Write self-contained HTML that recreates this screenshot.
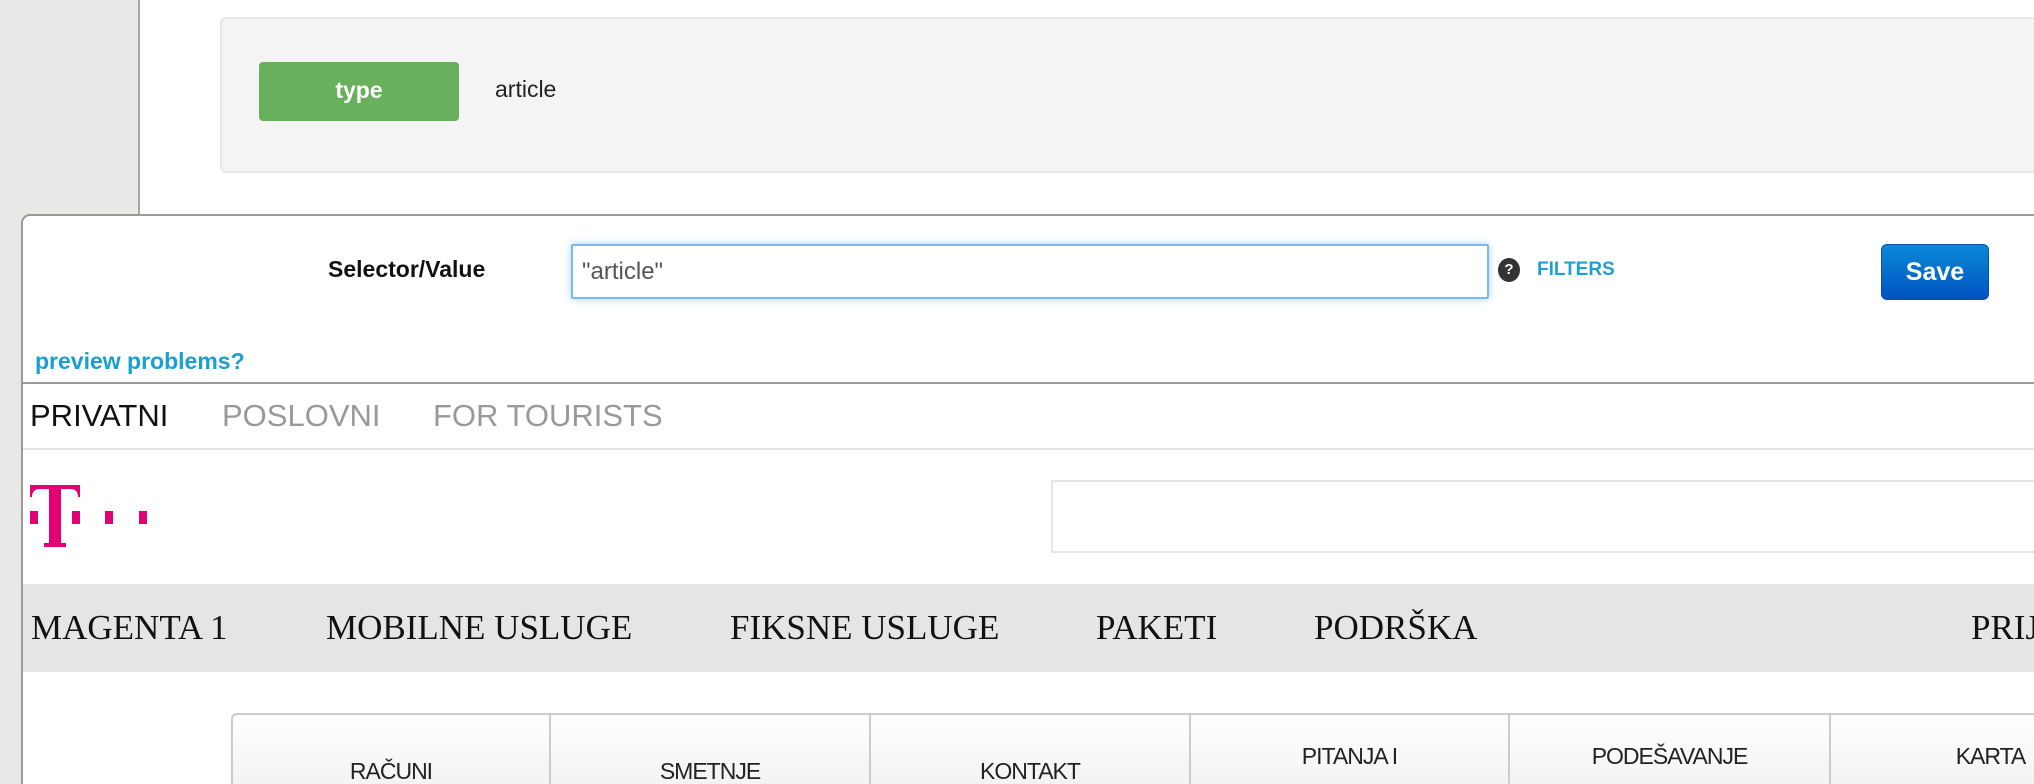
<!DOCTYPE html>
<html style="width:2034px;height:784px;overflow:hidden"><head><meta charset="utf-8"><style>
*{margin:0;padding:0;box-sizing:border-box}
body{width:2034px;height:784px;overflow:hidden;background:#fff;position:relative;font-family:"Liberation Sans",Arial,sans-serif}
.a{position:absolute}
</style></head><body>
<div class="a" style="left:0;top:0;width:140px;height:784px;background:#e8e9e6;border-right:2px solid #a5a5a5"></div>
<div class="a" style="left:220px;top:17px;width:1900px;height:156px;background:#f4f4f4;border:2px solid #e8e8e8;border-radius:6px"></div>
<div class="a" style="left:259px;top:62px;width:200px;height:59px;background:#68b05c;border-radius:4px;color:#fff;font-weight:bold;font-size:23px;text-align:center;line-height:57px">type</div>
<div class="a" style="left:495px;top:76px;font-size:23px;color:#222">article</div>
<div class="a" style="left:21px;top:214px;width:2100px;height:600px;background:#fff;border:2px solid #9a9a9a;border-radius:9px 0 0 0"></div>
<div class="a" style="left:328px;top:256px;font-size:23px;font-weight:bold;color:#111">Selector/Value</div>
<div class="a" style="left:571px;top:244px;width:918px;height:55px;border:2px solid #7ab8ee;box-shadow:0 0 8px #a9d3f7;border-radius:2px;font-size:24px;color:#555;padding:12px 0 0 9px">"article"</div>
<div class="a" style="left:1498px;top:258px;width:22px;height:24px;border-radius:50%;background:#333;color:#fff;font-size:15px;font-weight:bold;text-align:center;line-height:24px">?</div>
<div class="a" style="left:1537px;top:259px;font-size:19px;font-weight:bold;color:#1fa0d0">FILTERS</div>
<div class="a" style="left:1881px;top:244px;width:108px;height:56px;border-radius:6px;background:linear-gradient(#0a8ad6,#0052c2);border:1px solid #0a4fa8;color:#fff;font-weight:bold;font-size:25px;text-align:center;line-height:54px">Save</div>
<div class="a" style="left:35px;top:348px;font-size:23px;font-weight:bold;color:#1a9fd0">preview problems?</div>
<div class="a" style="left:23px;top:382px;width:2011px;height:2px;background:#999"></div>
<div class="a" style="left:30px;top:398px;font-size:31px;color:#111">PRIVATNI</div>
<div class="a" style="left:222px;top:398px;font-size:31px;color:#999">POSLOVNI</div>
<div class="a" style="left:433px;top:398px;font-size:31px;color:#999">FOR TOURISTS</div>
<div class="a" style="left:23px;top:448px;width:2011px;height:2px;background:#e5e5e5"></div>
<svg class="a" style="left:30px;top:485px" width="124" height="62" viewBox="0 0 124 62"><g fill="#e20074"><path d="M0 0h50v12h-2q0-8-8-8h-9v54h5v4H14v-4h5V4h-9q-8 0-8 8H0z"/><rect x="0" y="26" width="8" height="13"/><rect x="42" y="26" width="8" height="13"/><rect x="75" y="26" width="8" height="13"/><rect x="109" y="26" width="8" height="13"/></g></svg>
<div class="a" style="left:1051px;top:480px;width:1000px;height:73px;border:2px solid #e5e5e5"></div>
<div class="a" style="left:23px;top:584px;width:2011px;height:88px;background:#e5e5e5;font-family:'Liberation Serif',serif;font-size:35px;color:#111;overflow:hidden">
<span class="a" style="left:8px;top:24px">MAGENTA 1</span>
<span class="a" style="left:303px;top:24px;white-space:nowrap">MOBILNE USLUGE</span>
<span class="a" style="left:707px;top:24px;white-space:nowrap">FIKSNE USLUGE</span>
<span class="a" style="left:1073px;top:24px">PAKETI</span>
<span class="a" style="left:1291px;top:24px">PODRŠKA</span>
<span class="a" style="left:1948px;top:24px">PRIJ</span>
</div>
<div class="a" style="left:231px;top:713px;width:1803px;height:71px;border:2px solid #ccc;border-bottom:0;border-right:0;border-radius:6px 0 0 0;background:linear-gradient(#fff,#f3f3f3)"></div>
<div class="a" style="top:713px;left:0;width:2034px;height:71px;overflow:hidden;font-size:23px;color:#222;text-align:center;letter-spacing:-1px">
<div class="a" style="left:549px;top:2px;width:2px;height:70px;background:#ccc"></div>
<div class="a" style="left:869px;top:2px;width:2px;height:70px;background:#ccc"></div>
<div class="a" style="left:1189px;top:2px;width:2px;height:70px;background:#ccc"></div>
<div class="a" style="left:1508px;top:2px;width:2px;height:70px;background:#ccc"></div>
<div class="a" style="left:1829px;top:2px;width:2px;height:70px;background:#ccc"></div>
<div class="a" style="left:233px;top:45px;width:316px">RAČUNI</div>
<div class="a" style="left:551px;top:45px;width:318px">SMETNJE</div>
<div class="a" style="left:871px;top:45px;width:318px">KONTAKT</div>
<div class="a" style="left:1191px;top:24px;width:317px;line-height:38px">PITANJA I<br>ODGOVORI</div>
<div class="a" style="left:1510px;top:24px;width:319px;line-height:38px">PODEŠAVANJE<br>UREĐAJA</div>
<div class="a" style="left:1831px;top:24px;width:319px;line-height:38px">KARTA<br>POKRIVENOSTI</div>
</div>
</body></html>
